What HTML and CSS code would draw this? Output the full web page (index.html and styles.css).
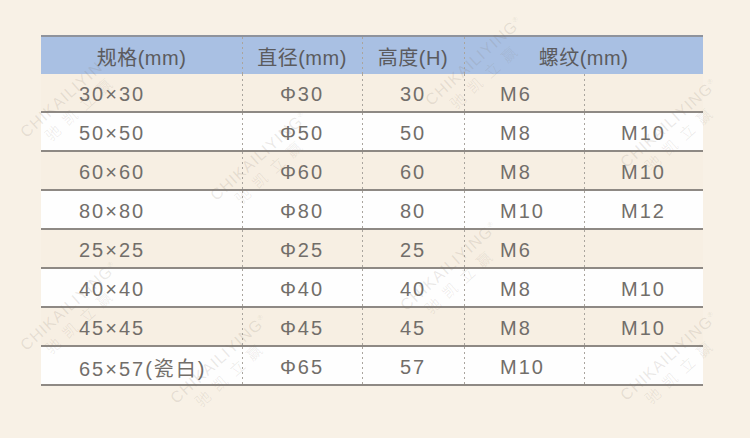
FILE: index.html
```html
<!DOCTYPE html>
<html lang="zh">
<head>
<meta charset="utf-8">
<title>规格表</title>
<link rel="stylesheet" href="styles.css">
</head>
<body>
<div class="page">
  <div class="spec">
    <div class="row head">
      <div class="c">规格(mm)</div>
      <div class="c dv">直径(mm)</div>
      <div class="c dv">高度(H)</div>
      <div class="c dv span">螺纹(mm)</div>
    </div>
    <div class="row odd">
      <div class="c l">30×30</div><div class="c dv">Φ30</div><div class="c dv">30</div><div class="c dv l">M6</div><div class="c dv"></div>
    </div>
    <div class="row even">
      <div class="c l">50×50</div><div class="c dv">Φ50</div><div class="c dv">50</div><div class="c dv l">M8</div><div class="c dv">M10</div>
    </div>
    <div class="row odd">
      <div class="c l">60×60</div><div class="c dv">Φ60</div><div class="c dv">60</div><div class="c dv l">M8</div><div class="c dv">M10</div>
    </div>
    <div class="row even">
      <div class="c l">80×80</div><div class="c dv">Φ80</div><div class="c dv">80</div><div class="c dv l">M10</div><div class="c dv">M12</div>
    </div>
    <div class="row odd">
      <div class="c l">25×25</div><div class="c dv">Φ25</div><div class="c dv">25</div><div class="c dv l">M6</div><div class="c dv"></div>
    </div>
    <div class="row even">
      <div class="c l">40×40</div><div class="c dv">Φ40</div><div class="c dv">40</div><div class="c dv l">M8</div><div class="c dv">M10</div>
    </div>
    <div class="row odd">
      <div class="c l">45×45</div><div class="c dv">Φ45</div><div class="c dv">45</div><div class="c dv l">M8</div><div class="c dv">M10</div>
    </div>
    <div class="row even">
      <div class="c l">65×57(瓷白)</div><div class="c dv">Φ65</div><div class="c dv">57</div><div class="c dv l">M10</div><div class="c dv"></div>
    </div>
  </div>

  <div class="wm w1"><span>CHIKAILIYING<sup>®</sup></span><span class="cn">驰凯立赢</span></div>
  <div class="wm w2"><span>CHIKAILIYING<sup>®</sup></span><span class="cn">驰凯立赢</span></div>
  <div class="wm w3"><span>CHIKAILIYING<sup>®</sup></span><span class="cn">驰凯立赢</span></div>
  <div class="wm w4"><span>CHIKAILIYING<sup>®</sup></span><span class="cn">驰凯立赢</span></div>
  <div class="wm w5"><span>CHIKAILIYING<sup>®</sup></span><span class="cn">驰凯立赢</span></div>
  <div class="wm w6"><span>CHIKAILIYING<sup>®</sup></span><span class="cn">驰凯立赢</span></div>
  <div class="wm w7"><span>CHIKAILIYING<sup>®</sup></span><span class="cn">驰凯立赢</span></div>
  <div class="wm w8"><span>CHIKAILIYING<sup>®</sup></span><span class="cn">驰凯立赢</span></div>
</div>
</body>
</html>
```

FILE: styles.css
```css
html, body {
  margin: 0;
  padding: 0;
}
body {
  background: #f8f1e6;
  font-family: "Liberation Sans", "Noto Sans CJK SC", sans-serif;
  width: 750px;
  height: 438px;
  overflow: hidden;
}
.page {
  position: relative;
  width: 750px;
  height: 438px;
  padding-top: 35px;
  box-sizing: border-box;
}
.spec {
  margin-left: 41px;
  width: 662px;
}
.row {
  display: grid;
  grid-template-columns: 201px 120px 102px 120px 119px;
  height: 37px;
  border-bottom: 2px solid #8e8984;
  color: #726e6a;
  font-size: 20px;
  letter-spacing: 2px;
}
.row.head {
  grid-template-columns: 201px 120px 102px 239px;
  background: #a9c0e3;
  border-top: 2px solid #8f939c;
  border-bottom: none;
  height: 37px;
  color: #5b5b5e;
  letter-spacing: 0.5px;
}
.row.odd { background: #f7efe3; }
.row.even { background: #fefefe; }
.c {
  display: flex;
  align-items: center;
  justify-content: center;
  white-space: nowrap;
  padding-top: 3px;
}
.row.head .c { padding-top: 1px; }
.c.l {
  justify-content: flex-start;
  padding-left: 38px;
}
.dv {
  background-image: linear-gradient(#aaa59e 40%, transparent 40%);
  background-size: 1px 5px;
  background-repeat: repeat-y;
  background-position: left top;
}
.c.dv.l { padding-left: 36px; }

.wm {
  position: absolute;
  width: 150px;
  display: flex;
  flex-direction: column;
  align-items: center;
  transform: rotate(-42deg);
  transform-origin: center;
  color: rgba(130, 118, 105, 0.16);
  pointer-events: none;
  line-height: 1.15;
}
.wm span {
  font-family: "Liberation Sans", sans-serif;
  font-size: 16px;
  letter-spacing: 1px;
  white-space: nowrap;
}
.wm sup { font-size: 7px; }
.wm .cn {
  font-family: "Noto Sans CJK SC", sans-serif;
  font-weight: 300;
  font-size: 15px;
  letter-spacing: 8px;
}
.w1 { left: 0px; top: 82px; }
.w2 { left: 190px; top: 145px; }
.w3 { left: 405px; top: 50px; }
.w4 { left: 600px; top: 112px; }
.w5 { left: 0px; top: 295px; }
.w6 { left: 380px; top: 255px; }
.w7 { left: 150px; top: 348px; }
.w8 { left: 600px; top: 345px; }
```
